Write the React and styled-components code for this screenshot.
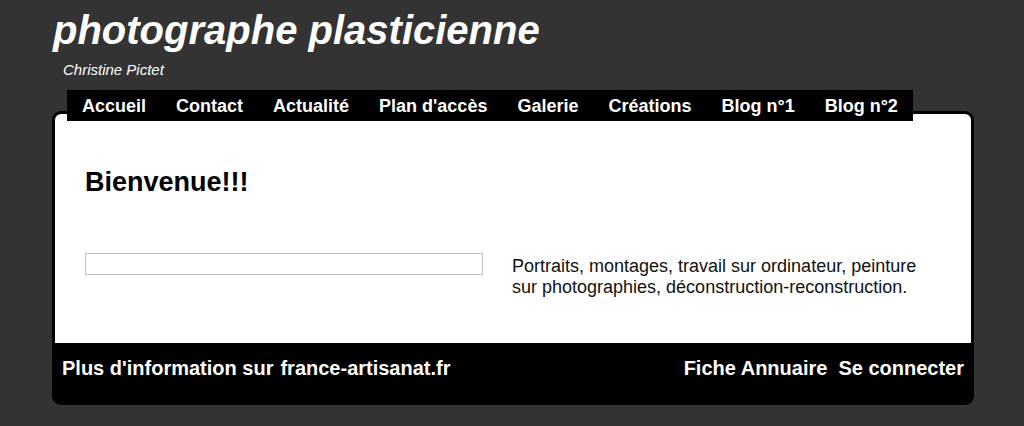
import React from 'react'
import styled, {createGlobalStyle} from 'styled-components'

const GlobalStyle = createGlobalStyle`
  html, body {
    margin: 0;
    padding: 0;
    background: #333333;
    font-family: "Liberation Sans", Arial, sans-serif;
  }
`

const Page = styled.div`
  width: 1024px;
  min-height: 426px;
  background: #333333;
  padding-top: 7px;
  box-sizing: border-box;
`

const Header = styled.header`
  padding-left: 53px;
`

const SiteTitle = styled.h1`
  margin: 0;
  font-size: 40px;
  line-height: 46px;
  font-weight: bold;
  font-style: italic;
  color: #fff;
`

const SubTitle = styled.div`
  margin: 8px 0 0 10px;
  font-size: 15px;
  line-height: 17px;
  font-style: italic;
  color: #fff;
`

const Nav = styled.nav`
  position: relative;
  z-index: 1;
  display: flex;
  width: max-content;
  margin: 12px 0 0 67px;
  height: 31px;
  padding-top: 2px;
  box-sizing: border-box;
  background: #000;
`

const NavItem = styled.a`
  padding: 0 15px;
  font-size: 18px;
  font-weight: bold;
  line-height: 29px;
  color: #fff;
  text-decoration: none;
  white-space: nowrap;
`

const Panel = styled.div`
  margin: -10px 0 0 52px;
  width: 922px;
  background: #000;
  border-radius: 9px;
  padding: 3px 3px 0;
  box-sizing: border-box;
`

const Content = styled.main`
  background: #fff;
  border-radius: 6px 6px 0 0;
  padding: 52px 30px 45px;
`

const Welcome = styled.h2`
  margin: 0 0 55px;
  font-size: 27px;
  line-height: 32px;
  font-weight: bold;
  color: #000;
`

const Columns = styled.div`
  display: grid;
  grid-template-columns: 398px 1fr;
  column-gap: 29px;
  align-items: start;
`

const EmptyBox = styled.div`
  height: 20px;
  border: 1px solid #c0c0c0;
`

const Intro = styled.p`
  margin: 0;
  padding-top: 3px;
  font-size: 18px;
  line-height: 21px;
  color: #111;
`

const Footer = styled.footer`
  display: flex;
  justify-content: space-between;
  height: 62px;
  padding: 14px 7px 0 7px;
  box-sizing: border-box;
`

const FooterGroup = styled.div`
  display: flex;
  gap: ${props => props.$gap}px;
`

const FooterLink = styled.a`
  font-size: 20px;
  line-height: 23px;
  font-weight: bold;
  color: #fff;
  text-decoration: none;
  white-space: nowrap;
`

const menu = ['Accueil', 'Contact', 'Actualité', "Plan d'accès", 'Galerie', 'Créations', 'Blog n°1', 'Blog n°2']

export default function App() {
  return (
    <Page>
      <GlobalStyle/>
      <Header>
        <SiteTitle>photographe plasticienne</SiteTitle>
        <SubTitle>Christine Pictet</SubTitle>
      </Header>
      <Nav>
        {menu.map(item => <NavItem key={item}>{item}</NavItem>)}
      </Nav>
      <Panel>
        <Content>
          <Welcome>Bienvenue!!!</Welcome>
          <Columns>
            <EmptyBox/>
            <Intro>
              Portraits, montages, travail sur ordinateur, peinture sur photographies, déconstruction-reconstruction.
            </Intro>
          </Columns>
        </Content>
        <Footer>
          <FooterGroup $gap={7}>
            <FooterLink>Plus d'information sur</FooterLink>
            <FooterLink>france-artisanat.fr</FooterLink>
          </FooterGroup>
          <FooterGroup $gap={11}>
            <FooterLink>Fiche Annuaire</FooterLink>
            <FooterLink>Se connecter</FooterLink>
          </FooterGroup>
        </Footer>
      </Panel>
    </Page>
  )
}
